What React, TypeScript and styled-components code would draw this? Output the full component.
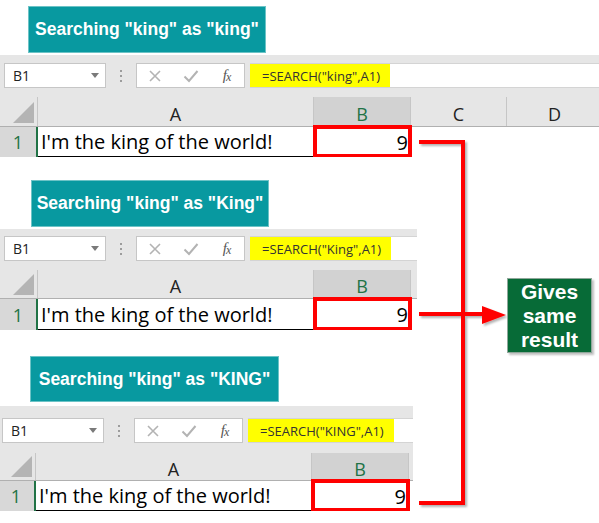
import React from 'react';
import styled, { createGlobalStyle } from 'styled-components';

const Global = createGlobalStyle`
  html, body { margin: 0; padding: 0; background: #fff; }
  body { width: 599px; height: 523px; overflow: hidden; }
`;

const Page = styled.div`
  position: relative;
  width: 599px;
  height: 523px;
  overflow: hidden;
  background: #fff;
  font-family: "Open Sans", "Noto Sans", sans-serif;
`;

const Section = styled.section<{ $gap: number }>`
  display: flex;
  flex-direction: column;
  padding-top: ${p => p.$gap}px;
`;

const Title = styled.div<{ $left: number; $width: number; $height: number }>`
  margin-left: ${p => p.$left}px;
  width: ${p => p.$width}px;
  height: ${p => p.$height}px;
  box-sizing: border-box;
  background: #0899a0;
  border: 1px solid #6cc3c6;
  color: #fff;
  font: bold 17.5px "Liberation Sans", Arial, sans-serif;
  display: flex;
  align-items: center;
  justify-content: center;
  white-space: nowrap;
`;

const Sheet = styled.div<{ $width: number; $shift: number; $top: number }>`
  margin-top: ${p => p.$top}px;
  margin-left: ${p => -p.$shift}px;
  width: ${p => p.$width}px;
  overflow: hidden;
  background: #e6e6e6;
`;

const Toolbar = styled.div<{ $padTop: number; $padBottom: number }>`
  display: flex;
  height: 25px;
  padding: ${p => p.$padTop}px 0 ${p => p.$padBottom}px 4px;
  background: #e6e6e6;
`;

const NameBox = styled.div`
  width: 102px;
  flex: none;
  box-sizing: border-box;
  background: #fff;
  border: 1px solid #c6c6c6;
  display: flex;
  align-items: center;
  justify-content: space-between;
  padding: 0 6px 0 8px;
  font: 14px "Open Sans", sans-serif;
  color: #222;
`;

const Caret = styled.span`
  width: 0;
  height: 0;
  border-left: 4px solid transparent;
  border-right: 4px solid transparent;
  border-top: 5px solid #7a7a7a;
`;

const Grip = styled.div`
  width: 30px;
  flex: none;
  display: flex;
  flex-direction: column;
  align-items: center;
  justify-content: center;
  gap: 3px;
`;

const GripDot = styled.span`
  width: 2px;
  height: 2px;
  background: #9c9c9c;
`;

const FxBox = styled.div`
  width: 109px;
  flex: none;
  box-sizing: border-box;
  background: #fff;
  border: 1px solid #c6c6c6;
  display: grid;
  grid-template-columns: 36px 36px 1fr;
  align-items: center;
  justify-items: center;
`;

const FxLabel = styled.span`
  font: italic 15px "Liberation Serif", "DejaVu Serif", serif;
  color: #555;
  letter-spacing: -1px;
  sub {
    font-size: 12px;
    vertical-align: baseline;
    position: relative;
    top: 1px;
  }
`;

const Formula = styled.div`
  flex: 1;
  margin-left: 5px;
  background: #fff;
  border-top: 1px solid #d4d4d4;
  border-bottom: 1px solid #d4d4d4;
  display: flex;
`;

const Highlight = styled.span`
  background: #ffff00;
  display: flex;
  align-items: center;
  padding: 0 10px 0 12px;
  font: 13px "Open Sans", sans-serif;
  color: #333;
  white-space: nowrap;
`;

const HeaderRow = styled.div<{ $h: number }>`
  display: flex;
  height: ${p => p.$h}px;
  box-sizing: border-box;
  background: #e6e6e6;
  border-bottom: 1px solid #b0b0b0;
`;

const Corner = styled.div`
  width: 38px;
  flex: none;
  box-sizing: border-box;
  display: flex;
  align-items: flex-end;
  justify-content: flex-end;
  padding: 0 3px 3px 0;
  border-right: 1px solid #c6c6c6;
`;

const CornerTri = styled.div`
  width: 21px;
  height: 21px;
  background: #b4b4b4;
  clip-path: polygon(100% 0, 100% 100%, 0 100%);
`;

const ColHead = styled.div<{ $w: number; $sel?: boolean }>`
  width: ${p => p.$w}px;
  flex: none;
  box-sizing: border-box;
  border-right: 1px solid #c6c6c6;
  background: ${p => (p.$sel ? '#d2d2d2' : 'transparent')};
  color: ${p => (p.$sel ? '#217346' : '#222')};
  display: flex;
  align-items: center;
  justify-content: center;
  padding-top: 4px;
  font-size: 18px;
`;

const DataRow = styled.div<{ $h: number }>`
  display: flex;
  height: ${p => p.$h}px;
  background: #fff;
`;

const RowHead = styled.div`
  width: 38px;
  flex: none;
  box-sizing: border-box;
  background: #d8d8d8;
  color: #217346;
  border-right: 2px solid #217346;
  display: flex;
  align-items: center;
  justify-content: center;
  font-size: 18px;
`;

const TextCell = styled.div<{ $w: number }>`
  width: ${p => p.$w}px;
  flex: none;
  box-sizing: border-box;
  border-bottom: 1px solid #000;
  display: flex;
  align-items: center;
  padding-left: 3px;
  font-size: 20px;
  color: #000;
  white-space: nowrap;
`;

const ValueCell = styled.div<{ $w: number }>`
  position: relative;
  width: ${p => p.$w}px;
  flex: none;
  box-sizing: border-box;
  display: flex;
  align-items: center;
  justify-content: flex-end;
  padding-right: 3px;
  font-size: 20px;
  color: #000;
  &::after {
    content: '';
    position: absolute;
    top: -2px;
    left: -1px;
    right: -1px;
    bottom: -1px;
    border: 4px solid #ff0000;
  }
`;

const Callout = styled.div`
  position: absolute;
  left: 507px;
  top: 278px;
  width: 85px;
  height: 75px;
  box-sizing: border-box;
  background: #076b37;
  border: 1px solid #8fa79a;
  box-shadow: 2px 2px 2px rgba(0, 0, 0, 0.25);
  color: #fff;
  font: bold 21px/24px "Liberation Sans", Arial, sans-serif;
  text-align: center;
  display: flex;
  flex-direction: column;
  justify-content: center;
`;

const Overlay = styled.svg`
  position: absolute;
  left: 0;
  top: 0;
  pointer-events: none;
`;

type Conf = {
  title: string;
  formula: string;
  gap: number;
  titleLeft: number;
  titleW: number;
  titleH: number;
  sheetTop: number;
  sheetW: number;
  shift: number;
  padTop: number;
  padBottom: number;
  headH: number;
  rowH: number;
  extraCols: string[];
};

const sections: Conf[] = [
  { title: 'Searching "king" as "king"', formula: '=SEARCH("king",A1)', gap: 6, titleLeft: 28, titleW: 238, titleH: 47, sheetTop: 2, sheetW: 599, shift: 0, padTop: 8, padBottom: 9, headH: 30, rowH: 30, extraCols: ['C', 'D'] },
  { title: 'Searching "king" as "King"', formula: '=SEARCH("King",A1)', gap: 23, titleLeft: 31, titleW: 238, titleH: 47, sheetTop: 2, sheetW: 417, shift: 0, padTop: 7, padBottom: 9, headH: 29, rowH: 31, extraCols: [] },
  { title: 'Searching "king" as "KING"', formula: '=SEARCH("KING",A1)', gap: 26, titleLeft: 30, titleW: 249, titleH: 46, sheetTop: 4, sheetW: 415, shift: 2, padTop: 12, padBottom: 10, headH: 28, rowH: 30, extraCols: [] },
];

const CrossIcon = () => (
  <svg width="14" height="14" viewBox="0 0 14 14">
    <path d="M2 2 L12 12 M12 2 L2 12" stroke="#b3b3b3" strokeWidth="1.6" fill="none" />
  </svg>
);

const CheckIcon = () => (
  <svg width="16" height="14" viewBox="0 0 16 14">
    <path d="M1.5 7.5 L6 12 L14.5 2" stroke="#b3b3b3" strokeWidth="2" fill="none" />
  </svg>
);

const SheetBlock = ({ c }: { c: Conf }) => (
  <Section $gap={c.gap}>
    <Title $left={c.titleLeft} $width={c.titleW} $height={c.titleH}>{c.title}</Title>
    <Sheet $width={c.sheetW} $shift={c.shift} $top={c.sheetTop}>
      <Toolbar $padTop={c.padTop} $padBottom={c.padBottom}>
        <NameBox>
          <span>B1</span>
          <Caret />
        </NameBox>
        <Grip>
          <GripDot />
          <GripDot />
          <GripDot />
        </Grip>
        <FxBox>
          <CrossIcon />
          <CheckIcon />
          <FxLabel>f<sub>x</sub></FxLabel>
        </FxBox>
        <Formula>
          <Highlight>{c.formula}</Highlight>
        </Formula>
      </Toolbar>
      <HeaderRow $h={c.headH}>
        <Corner>
          <CornerTri />
        </Corner>
        <ColHead $w={276}>A</ColHead>
        <ColHead $w={97} $sel>B</ColHead>
        {c.extraCols.map(col => (
          <ColHead key={col} $w={96}>{col}</ColHead>
        ))}
      </HeaderRow>
      <DataRow $h={c.rowH}>
        <RowHead>1</RowHead>
        <TextCell $w={276}>I'm the king of the world!</TextCell>
        <ValueCell $w={97}>9</ValueCell>
      </DataRow>
    </Sheet>
  </Section>
);

export default function App() {
  return (
    <Page>
      <Global />
      {sections.map((c, i) => (
        <SheetBlock key={i} c={c} />
      ))}
      <Overlay width="599" height="523" viewBox="0 0 599 523">
        <defs>
          <filter id="sh" x="-20%" y="-20%" width="140%" height="140%">
            <feDropShadow dx="2" dy="2" stdDeviation="1" floodColor="#000" floodOpacity="0.3" />
          </filter>
        </defs>
        <g filter="url(#sh)">
          <polyline points="419,142 463,142 463,503 419,503" stroke="#ff0000" strokeWidth="4" fill="none" strokeLinejoin="miter" />
          <line x1="419" y1="314" x2="486" y2="314" stroke="#ff0000" strokeWidth="4" />
          <polygon points="482,306 506,315 482,324" fill="#ff0000" />
        </g>
      </Overlay>
      <Callout>
        <span>Gives</span>
        <span>same</span>
        <span>result</span>
      </Callout>
    </Page>
  );
}
